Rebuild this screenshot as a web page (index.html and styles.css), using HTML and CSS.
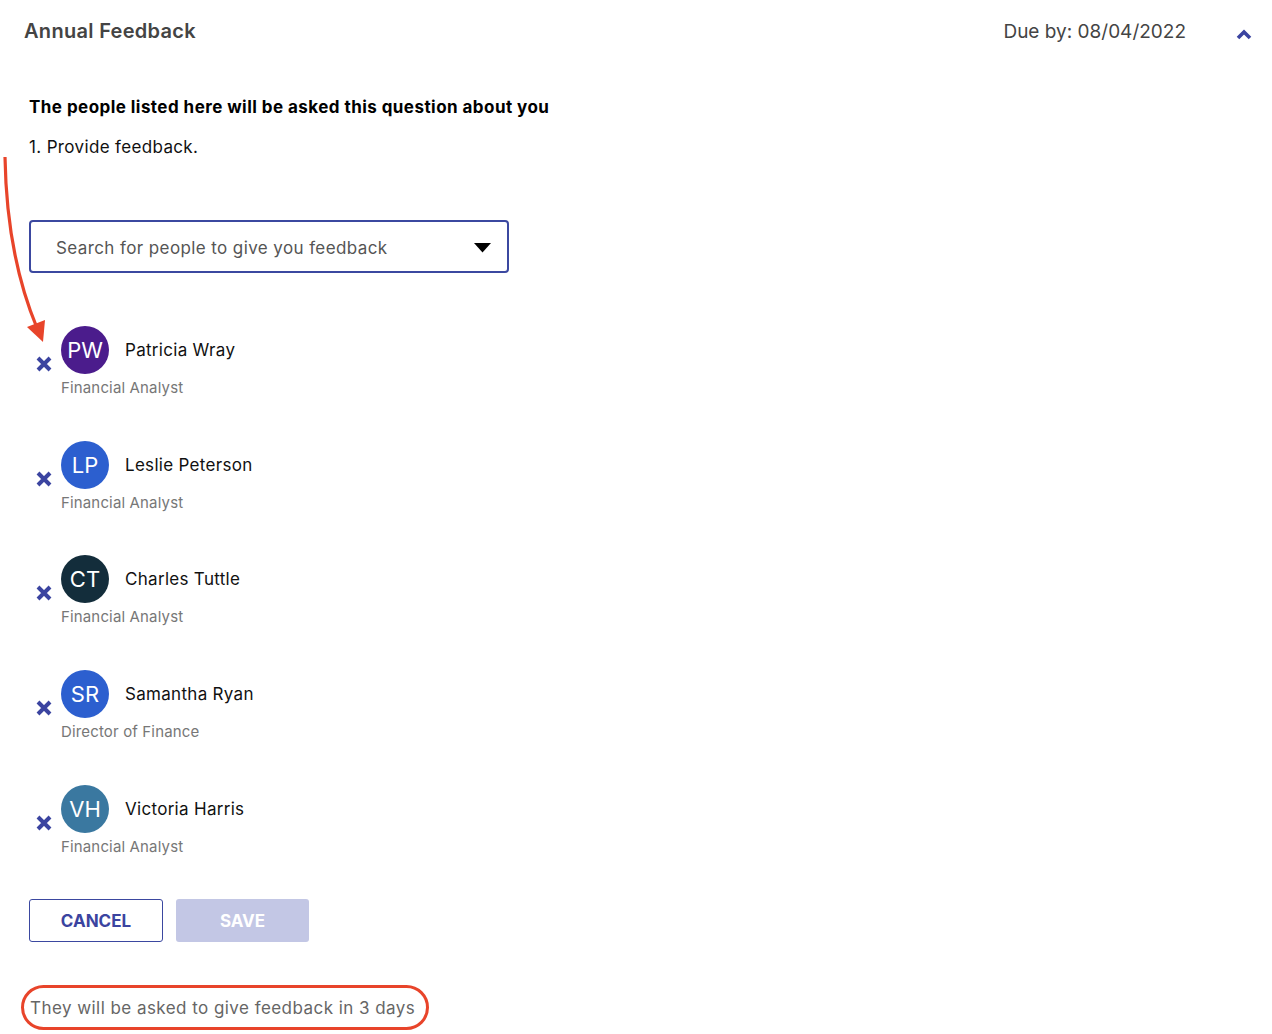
FILE: index.html
```html
<!DOCTYPE html>
<html lang="en">
<head>
    <meta charset="UTF-8">
    <meta name="viewport" content="width=device-width, initial-scale=1.0">
    <title>Annual Feedback</title>
    <link rel="stylesheet" href="styles.css">
</head>
<body>
    <div class="page">
        <!-- Header -->
        <div class="header">
            <h1 class="title">Annual Feedback</h1>
            <div class="due">Due by: 08/04/2022</div>
            <button class="collapse-btn" aria-label="Collapse">
                <svg width="16" height="11" viewBox="0 0 16 11">
                    <polyline points="2,9 8,3 14,9" fill="none" stroke="#3b44a0" stroke-width="3.6"/>
                </svg>
            </button>
        </div>

        <div class="content">
            <h2 class="question-title">The people listed here will be asked this question about you</h2>
            <p class="question">1. Provide feedback.</p>

            <div class="search-box">
                <span class="search-placeholder">Search for people to give you feedback</span>
                <svg class="search-caret" width="17" height="10" viewBox="0 0 17 10">
                    <polygon points="0,0 17,0 8.5,9.5" fill="#000"/>
                </svg>
            </div>

            <div class="people">
                <div class="person">
                    <button class="remove-btn" aria-label="Remove">
                        <svg width="16" height="16" viewBox="0 0 16 16"><path d="M2 2 L14 14 M14 2 L2 14" stroke="#3b44a0" stroke-width="4"/></svg>
                    </button>
                    <div class="person-info">
                        <div class="person-top">
                            <div class="avatar avatar-purple">PW</div>
                            <div class="person-name">Patricia Wray</div>
                        </div>
                        <div class="person-role">Financial Analyst</div>
                    </div>
                </div>
                <div class="person">
                    <button class="remove-btn" aria-label="Remove">
                        <svg width="16" height="16" viewBox="0 0 16 16"><path d="M2 2 L14 14 M14 2 L2 14" stroke="#3b44a0" stroke-width="4"/></svg>
                    </button>
                    <div class="person-info">
                        <div class="person-top">
                            <div class="avatar avatar-blue">LP</div>
                            <div class="person-name">Leslie Peterson</div>
                        </div>
                        <div class="person-role">Financial Analyst</div>
                    </div>
                </div>
                <div class="person">
                    <button class="remove-btn" aria-label="Remove">
                        <svg width="16" height="16" viewBox="0 0 16 16"><path d="M2 2 L14 14 M14 2 L2 14" stroke="#3b44a0" stroke-width="4"/></svg>
                    </button>
                    <div class="person-info">
                        <div class="person-top">
                            <div class="avatar avatar-dark">CT</div>
                            <div class="person-name">Charles Tuttle</div>
                        </div>
                        <div class="person-role">Financial Analyst</div>
                    </div>
                </div>
                <div class="person">
                    <button class="remove-btn" aria-label="Remove">
                        <svg width="16" height="16" viewBox="0 0 16 16"><path d="M2 2 L14 14 M14 2 L2 14" stroke="#3b44a0" stroke-width="4"/></svg>
                    </button>
                    <div class="person-info">
                        <div class="person-top">
                            <div class="avatar avatar-blue">SR</div>
                            <div class="person-name">Samantha Ryan</div>
                        </div>
                        <div class="person-role">Director of Finance</div>
                    </div>
                </div>
                <div class="person">
                    <button class="remove-btn" aria-label="Remove">
                        <svg width="16" height="16" viewBox="0 0 16 16"><path d="M2 2 L14 14 M14 2 L2 14" stroke="#3b44a0" stroke-width="4"/></svg>
                    </button>
                    <div class="person-info">
                        <div class="person-top">
                            <div class="avatar avatar-teal">VH</div>
                            <div class="person-name">Victoria Harris</div>
                        </div>
                        <div class="person-role">Financial Analyst</div>
                    </div>
                </div>
            </div>

            <div class="actions">
                <button class="btn btn-outline">CANCEL</button>
                <button class="btn btn-disabled" disabled>SAVE</button>
            </div>

            <p class="note"><span class="note-highlight">They will be asked to give feedback in 3 days</span></p>
        </div>

        <!-- annotation arrow drawn over the page -->
        <svg class="annotation-arrow" width="60" height="200" viewBox="0 0 60 200">
            <path d="M5 7 C 6 70, 15 125, 37 178" fill="none" stroke="#e8442a" stroke-width="3.2"/>
            <polygon points="27,177 45,170 43,192" fill="#e8442a"/>
        </svg>
    </div>
</body>
</html>
```

FILE: styles.css
```css
* {
    margin: 0;
    padding: 0;
    box-sizing: border-box;
}

body {
    font-family: Inter, Lato, sans-serif;
    background: #fff;
    color: #111;
}

.page {
    position: relative;
    width: 1272px;
    height: 1034px;
    overflow: hidden;
}

/* Header */
.header {
    display: flex;
    align-items: center;
    height: 62px;
    padding: 0 20px 0 24px;
}

.title {
    flex: 1;
    font-size: 20px;
    font-weight: 600;
    color: #444;
    letter-spacing: 0.3px;
}

.due {
    font-size: 19px;
    color: #444;
    margin-right: 50px;
}

.collapse-btn {
    border: none;
    background: none;
    display: flex;
    margin-top: 6px;
    cursor: pointer;
}

/* Content */
.content {
    padding: 33px 0 0 29px;
}

.question-title {
    font-size: 17px;
    font-weight: 700;
    color: #000;
    line-height: 24px;
    letter-spacing: 0.45px;
}

.question {
    font-size: 17px;
    line-height: 24px;
    margin-top: 16px;
    letter-spacing: 0.35px;
}

.search-box {
    display: flex;
    align-items: center;
    justify-content: space-between;
    width: 480px;
    height: 53px;
    margin-top: 61px;
    padding: 0 16px 0 25px;
    border: 2px solid #3b48a0;
    border-radius: 4px;
}

.search-placeholder {
    font-size: 17px;
    color: #555;
    letter-spacing: 0.4px;
    margin-top: 3px;
}

.search-caret {
    margin-top: 2px;
}

/* People list */
.people {
    margin-top: 53px;
    display: flex;
    flex-direction: column;
    gap: 42.7px;
}

.person {
    display: flex;
    align-items: flex-start;
}

.remove-btn {
    border: none;
    background: none;
    width: 32px;
    padding-left: 7px;
    margin-top: 30px;
    display: flex;
    cursor: pointer;
}

.person-top {
    display: flex;
    align-items: center;
    gap: 16px;
}

.avatar {
    width: 48px;
    height: 48px;
    border-radius: 50%;
    display: flex;
    align-items: center;
    justify-content: center;
    color: #fff;
    font-size: 22px;
}

.avatar-purple { background: #4b1c8c; }
.avatar-blue { background: #2c5fcf; }
.avatar-dark { background: #132d3b; }
.avatar-teal { background: #3a78a0; }

.person-name {
    font-size: 17px;
    color: #111;
    letter-spacing: 0.3px;
}

.person-role {
    font-size: 15px;
    line-height: 20px;
    margin-top: 4px;
    color: #777;
    letter-spacing: 0.15px;
}

/* Buttons */
.actions {
    display: flex;
    gap: 13px;
    margin-top: 42px;
}

.btn {
    width: 134px;
    height: 43px;
    border-radius: 3px;
    font-family: inherit;
    font-size: 17px;
    font-weight: 700;
    padding-top: 2px;
}

.btn-outline {
    background: #fff;
    color: #3b44a0;
    border: 1px solid #3b48a0;
    cursor: pointer;
}

.btn-disabled {
    background: #c3c7e5;
    color: #fff;
    border: none;
    width: 133px;
}

.note {
    margin-top: 43px;
    margin-left: -8px;
    font-size: 17px;
    line-height: 20px;
    color: #666;
    letter-spacing: 0.45px;
}

.note-highlight {
    display: inline-block;
    padding: 10px 11px 9px 6px;
    border: 3px solid #e8442a;
    border-radius: 24px;
}

/* Annotation overlay */
.annotation-arrow {
    position: absolute;
    left: 0;
    top: 150px;
}
```
